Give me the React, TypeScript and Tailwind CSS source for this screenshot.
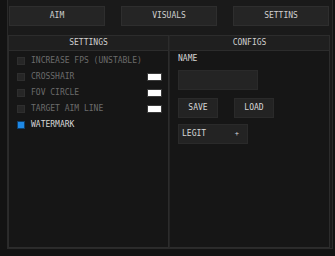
const font = { fontFamily: '"DejaVu Sans Mono", "Liberation Mono", monospace' };

const tabs = ["AIM", "VISUALS", "SETTINS"];

const options = [
  { label: "INCREASE FPS (UNSTABLE)", checked: false, color: false },
  { label: "CROSSHAIR", checked: false, color: true },
  { label: "FOV CIRCLE", checked: false, color: true },
  { label: "TARGET AIM LINE", checked: false, color: true },
  { label: "WATERMARK", checked: true, color: false },
];

const PanelHeader = ({ title }: { title: string }) => (
  <div className="h-[15px] flex items-center justify-center bg-[#1f1f1f] border-b border-[#2c2c2c] text-[8px] text-[#cfcfcf] leading-none">
    {title}
  </div>
);

export default function App() {
  return (
    <div className="w-[335px] h-[256px] bg-[#131313] overflow-hidden" style={font}>
      <div className="ml-[7px] w-[326px] h-[249px] bg-[#1a1a1a] border-x border-b border-[#2a2a2a] flex flex-col">
        <div className="flex gap-4 pl-[1px] pt-[6px]">
          {tabs.map((t) => (
            <div
              key={t}
              className="w-[96px] h-[20px] bg-[#252525] border border-[#2e2e2e] flex items-center justify-center text-[8px] text-[#cfcfcf] leading-none"
            >
              {t}
            </div>
          ))}
        </div>
        <div className="flex mt-[9px] h-[213px]">
          <div className="w-[161px] h-full bg-[#161616] border border-[#2c2c2c] flex flex-col">
            <PanelHeader title="SETTINGS" />
            <div className="flex flex-col pt-[2px] pl-[8px] pr-[6px]">
              {options.map((o) => (
                <div key={o.label} className="h-4 flex items-center">
                  <div
                    className={
                      o.checked
                        ? "w-[8px] h-[8px] bg-[#1e88e5] border border-[#0f3f6b]"
                        : "w-[8px] h-[8px] bg-[#262626] border border-[#2e2e2e]"
                    }
                  />
                  <span
                    className={
                      o.checked
                        ? "ml-[6px] text-[8px] leading-none text-[#d6d6d6]"
                        : "ml-[6px] text-[8px] leading-none text-[#6b6b6b]"
                    }
                  >
                    {o.label}
                  </span>
                  {o.color && (
                    <div className="ml-auto w-[15px] h-[8px] bg-white border border-[#3a3a3a]" />
                  )}
                </div>
              ))}
            </div>
          </div>
          <div className="w-[161px] h-full bg-[#161616] border border-[#2c2c2c] border-l-[#242424] flex flex-col">
            <PanelHeader title="CONFIGS" />
            <div className="flex flex-col pl-[8px] pt-[4px]">
              <span className="text-[8px] leading-none text-[#d6d6d6]">NAME</span>
              <div className="mt-[7px] w-[80px] h-[20px] bg-[#242424] border border-[#2a2a2a]" />
              <div className="flex gap-4 mt-[8px]">
                <div className="w-[40px] h-[20px] bg-[#232323] border border-[#2a2a2a] flex items-center justify-center text-[8px] leading-none text-[#d6d6d6]">
                  SAVE
                </div>
                <div className="w-[40px] h-[20px] bg-[#232323] border border-[#2a2a2a] flex items-center justify-center text-[8px] leading-none text-[#d6d6d6]">
                  LOAD
                </div>
              </div>
              <div className="mt-[6px] w-[70px] h-[20px] bg-[#232323] border border-[#2a2a2a] flex items-center pl-[3px] pr-[8px] text-[8px] leading-none text-[#d6d6d6]">
                <span>LEGIT</span>
                <span className="ml-auto text-[7px]">+</span>
              </div>
            </div>
          </div>
        </div>
      </div>
    </div>
  );
}
